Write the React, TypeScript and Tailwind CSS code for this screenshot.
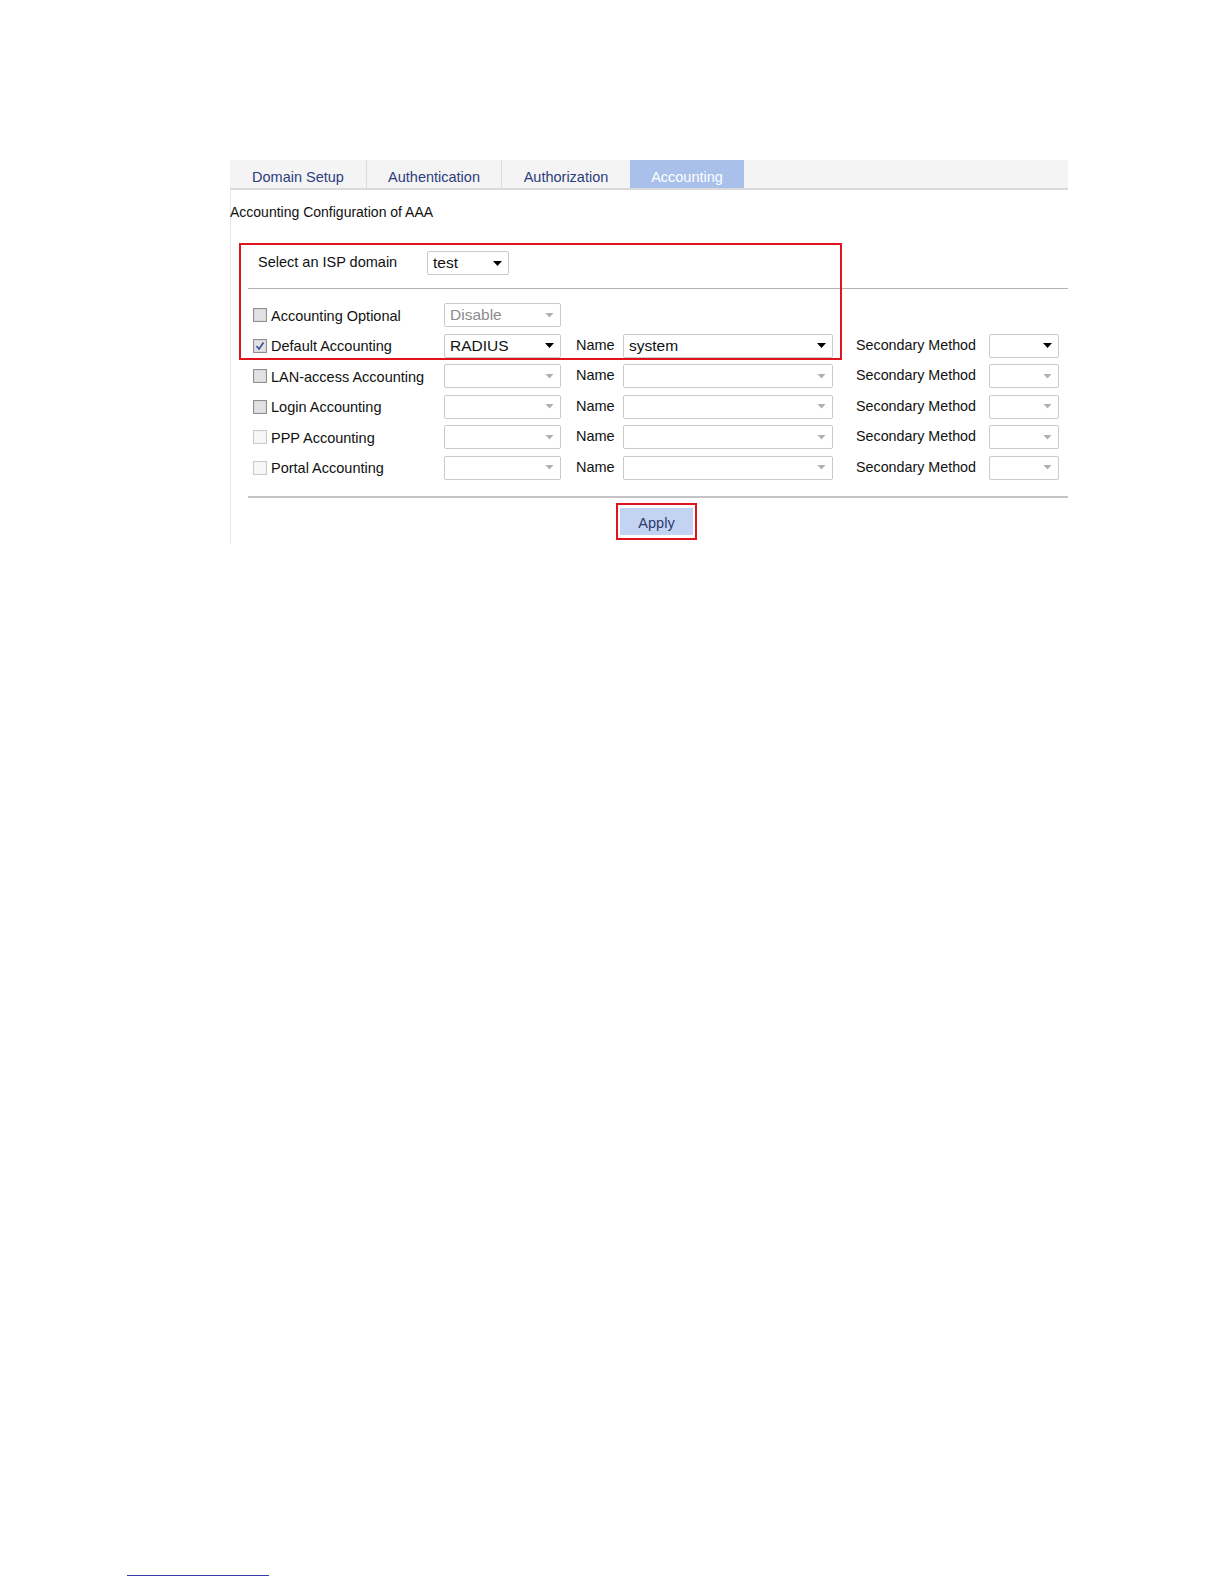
import React from "react";

const FONT = { fontFamily: '"Liberation Sans", Arial, sans-serif' };

function Arrow({ disabled }: { disabled?: boolean }) {
  return disabled ? (
    <svg width="9" height="5" viewBox="0 0 9 5" className="shrink-0">
      <path d="M0.5 0 L8.5 0 L4.5 4.5 Z" fill="#b0b0b0" />
    </svg>
  ) : (
    <svg width="9" height="5" viewBox="0 0 9 5" className="shrink-0">
      <path d="M0 0 L9 0 L4.5 5 Z" fill="#000" />
    </svg>
  );
}

function Select({
  width,
  value,
  disabled,
  dimText,
}: {
  width: string;
  value?: string;
  disabled?: boolean;
  dimText?: boolean;
}) {
  return (
    <div
      className={`${width} h-[24px] shrink-0 flex items-center justify-between pl-[5px] pr-[6px] border border-[#cacaca] rounded-[2px] bg-white`}
    >
      <span className={`text-[15.5px] leading-none ${dimText ? "text-[#8c8c8c]" : "text-[#111]"}`}>{value ?? ""}</span>
      <Arrow disabled={disabled} />
    </div>
  );
}

function Checkbox({ checked, faded }: { checked?: boolean; faded?: boolean }) {
  return (
    <div
      className={`w-[14px] h-[14px] shrink-0 border flex items-center justify-center ${
        faded ? "border-[#cbcbcb] bg-[#f2f2f2]" : "border-[#8f8f8f] bg-[#d8d8d8]"
      }`}
    >
      <div className={`w-[10px] h-[10px] ${faded ? "bg-[#f7f7f7]" : "bg-[#e2e2e2]"} flex items-center justify-center`}>
        {checked && (
          <svg width="10" height="10" viewBox="0 0 10 10">
            <path d="M1.5 5 L4 8 L8.5 1.5" stroke="#3a4a9a" strokeWidth="1.6" fill="none" />
          </svg>
        )}
      </div>
    </div>
  );
}

type Row = {
  label: string;
  checked?: boolean;
  faded?: boolean;
  first?: string;
  firstDisabled?: boolean;
  dim?: boolean;
  name?: string;
  nameDisabled?: boolean;
  secDisabled?: boolean;
  noExtra?: boolean;
};

const rows: Row[] = [
  { label: "Accounting Optional", first: "Disable", firstDisabled: true, dim: true, noExtra: true },
  { label: "Default Accounting", checked: true, first: "RADIUS", name: "system" },
  { label: "LAN-access Accounting", firstDisabled: true, nameDisabled: true, secDisabled: true },
  { label: "Login Accounting", firstDisabled: true, nameDisabled: true, secDisabled: true },
  { label: "PPP Accounting", faded: true, firstDisabled: true, nameDisabled: true, secDisabled: true },
  { label: "Portal Accounting", faded: true, firstDisabled: true, nameDisabled: true, secDisabled: true },
];

const TAB = "flex items-center justify-center pt-[7px] text-[14.5px] text-[#2d3d7e]";

export default function App() {
  return (
    <div className="w-[1224px] h-[1584px] bg-white relative" style={FONT}>
      <div className="pt-[160px] pl-[230px]">
        <div className="w-[838px] relative">
          {/* Tabs */}
          <div className="flex h-[30px] bg-[#f4f4f4] border-b-2 border-[#d9d9d9]">
            <div className={`w-[137px] border-r border-[#dcdcdc] ${TAB}`}>Domain Setup</div>
            <div className={`w-[135px] border-r border-[#dcdcdc] ${TAB}`}>Authentication</div>
            <div className={`w-[128px] ${TAB}`}>Authorization</div>
            <div className="w-[114px] flex items-center justify-center pt-[7px] bg-[#a8c0ea] text-[14.5px] text-white">
              Accounting
            </div>
          </div>

          <div className="border-l border-[#e6e6e6] h-[354px]">
            <div className="pt-[13px] text-[14px] text-[#111] leading-[18px] -ml-px">
              Accounting Configuration of AAA
            </div>

            {/* ISP domain */}
            <div className="mt-[30px] flex items-center pl-[27px] h-[24px]">
              <div className="w-[169px] text-[14.5px] text-[#111]">Select an ISP domain</div>
              <Select width="w-[82px]" value="test" />
            </div>

            <div className="ml-[17px] mt-[13px] h-px bg-[#b4b4b4]" />

            {/* Rows */}
            <div className="mt-[14px] flex flex-col gap-[6.5px] pl-[22px]">
              {rows.map((r) => (
                <div key={r.label} className="flex items-center h-[24px]">
                  <div className="w-[191px] flex items-center shrink-0">
                    <Checkbox checked={r.checked} faded={r.faded} />
                    <span className="ml-[4px] text-[14.5px] text-[#111] mt-[3px]">{r.label}</span>
                  </div>
                  <Select width="w-[117px]" value={r.first} disabled={r.firstDisabled} dimText={r.dim} />
                  {!r.noExtra && (
                    <>
                      <div className="w-[62px] pl-[15px] text-[14.5px] text-[#111] shrink-0">Name</div>
                      <Select width="w-[210px]" value={r.name} disabled={r.nameDisabled} />
                      <div className="w-[156px] pl-[23px] text-[14.3px] text-[#111] shrink-0">Secondary Method</div>
                      <Select width="w-[70px]" disabled={r.secDisabled} />
                    </>
                  )}
                </div>
              ))}
            </div>

            <div className="ml-[17px] mt-[16px] h-[2px] bg-[#c4c4c4]" />

            <div className="mt-[5px] flex justify-start pl-[385px]">
              <div className="border-2 border-[#e0141c] px-[2px] py-[3px]">
                <div className="w-[73px] h-[27px] bg-[#c3d4f2] flex items-center justify-center pt-[5px] text-[14.5px] text-[#2a3a6e]">
                  Apply
                </div>
              </div>
            </div>
          </div>

          {/* Red highlight box */}
          <div className="absolute left-[9px] top-[83px] w-[603px] h-[117px] border-2 border-[#e0141c] pointer-events-none" />
        </div>
      </div>

      <div className="mt-[1031px] ml-[127px] w-[142px] h-px bg-[#3b3bb0]" />
    </div>
  );
}
